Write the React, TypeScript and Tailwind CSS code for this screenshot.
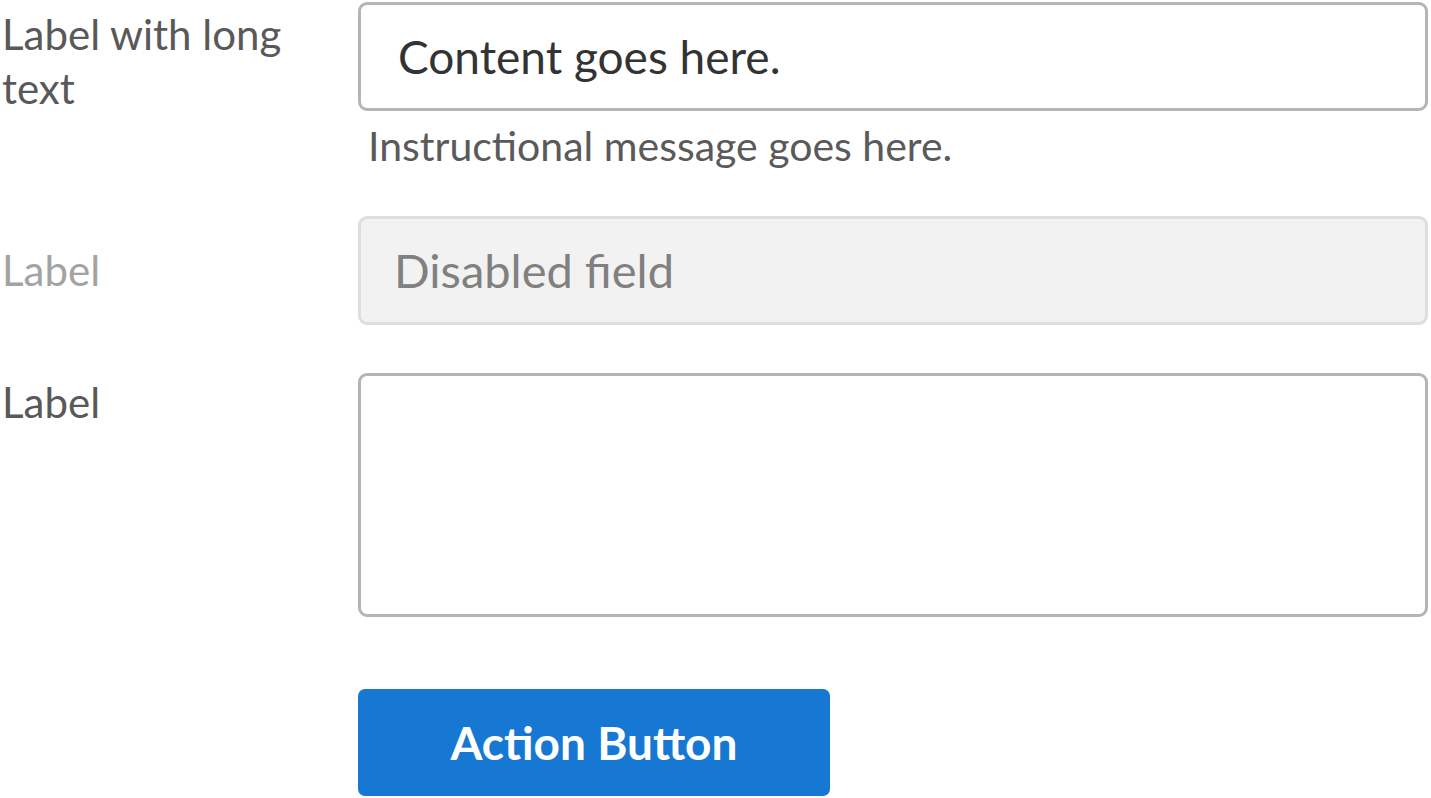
import React from 'react';

export default function App() {
  return (
    <div className="w-[1431px] h-[798px] bg-white overflow-hidden font-['Lato','Noto_Sans',sans-serif]">
      <div className="grid grid-cols-[358px_1070px]">
        {/* Row 1 */}
        <div className="pt-[7px] pl-[2px] pr-[60px] text-[42px] leading-[54px] text-[#595959]">
          Label with long text
        </div>
        <div className="pt-[2px]">
          <div className="h-[109px] border-[3px] border-[#b5b5b5] rounded-[9px] flex items-center pl-[37px] text-[46px] text-[#333333]">
            Content goes here.
          </div>
          <p className="pl-[10px] pt-[10px] text-[41px] leading-[50px] text-[#5a5a5a]">
            Instructional message goes here.
          </p>
        </div>

        {/* Row 2 */}
        <div className="flex items-center pl-[2px] mt-[45px] h-[109px] text-[42px] text-[#a3a3a3]">
          Label
        </div>
        <div className="mt-[45px]">
          <div className="h-[109px] border-[3px] border-[#dedede] bg-[#f2f2f2] rounded-[9px] flex items-center pl-[33px] text-[47px] text-[#808080]">
            Disabled field
          </div>
        </div>

        {/* Row 3 */}
        <div className="mt-[48px] pt-[2px] pl-[2px] text-[42px] leading-[54px] text-[#595959]">
          Label
        </div>
        <div className="mt-[48px]">
          <textarea
            className="block w-full h-[244px] border-[3px] border-[#b5b5b5] rounded-[9px] bg-white resize-none outline-none"
            readOnly
          />
        </div>

        {/* Action */}
        <div />
        <div className="mt-[72px]">
          <button className="w-[472px] h-[107px] bg-[#1778d3] rounded-[7px] text-white font-bold text-[46px]">
            Action Button
          </button>
        </div>
      </div>
    </div>
  );
}
